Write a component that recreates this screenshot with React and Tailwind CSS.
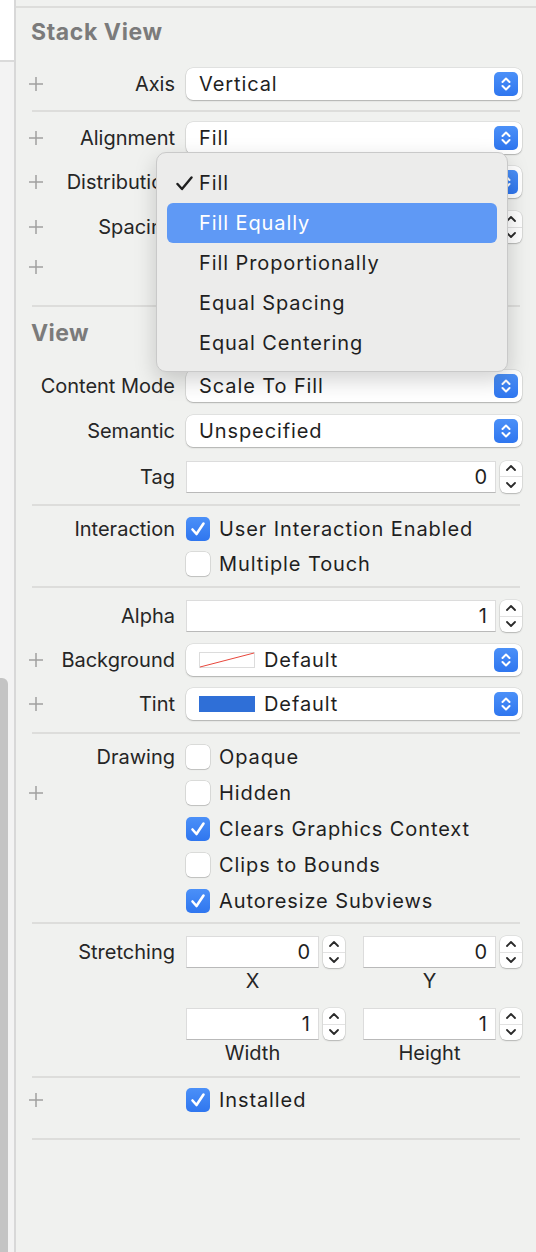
import React from "react";

const Plus = () => (
  <svg width="14" height="14" viewBox="0 0 14 14" className="shrink-0">
    <path d="M7 0v14M0 7h14" stroke="#a0a0a0" strokeWidth="1.5" />
  </svg>
);

const BlueChevron = () => (
  <div className="w-[24px] h-[24px] rounded-[5px] bg-gradient-to-b from-[#4b90f8] to-[#2f76ef] flex items-center justify-center shrink-0">
    <svg width="24" height="24" viewBox="0 0 24 24">
      <path d="M8.5 10L12 6.5L15.5 10M8.5 14L12 17.5L15.5 14" stroke="white" strokeWidth="2" fill="none" strokeLinecap="round" strokeLinejoin="round" />
    </svg>
  </div>
);

const Stepper = () => (
  <div className="w-[22px] h-[32px] rounded-[6px] bg-white shadow-[0_0_0_0.5px_rgba(0,0,0,0.12),0_1px_1.5px_rgba(0,0,0,0.2)] flex flex-col shrink-0">
    <div className="flex-1 flex items-center justify-center border-b border-[#e2e2e2]">
      <svg width="12" height="8" viewBox="0 0 12 8">
        <path d="M2 6L6 2L10 6" stroke="#2a2a2a" strokeWidth="1.8" fill="none" strokeLinecap="round" strokeLinejoin="round" />
      </svg>
    </div>
    <div className="flex-1 flex items-center justify-center">
      <svg width="12" height="8" viewBox="0 0 12 8">
        <path d="M2 2L6 6L10 2" stroke="#2a2a2a" strokeWidth="1.8" fill="none" strokeLinecap="round" strokeLinejoin="round" />
      </svg>
    </div>
  </div>
);

const Popup = ({ children }) => (
  <div className="flex-1 h-[32px] bg-white rounded-[7px] shadow-[0_0_0_0.5px_rgba(0,0,0,0.12),0_1px_1.5px_rgba(0,0,0,0.22)] flex items-center pl-[13px] pr-[4px]">
    <div className="flex-1 flex items-center text-[#1f1f1f] tracking-[0.9px]">{children}</div>
    <BlueChevron />
  </div>
);

const Field = ({ value, className = "flex-1" }) => (
  <div className={`${className} flex items-center gap-[4px]`}>
    <div className="flex-1 h-[32px] bg-white border border-[#dcdcdc] border-b-[#b9b9b9] flex items-center justify-end pr-[8px] text-[#1f1f1f]">
      {value}
    </div>
    <Stepper />
  </div>
);

const Check = ({ on }) =>
  on ? (
    <div className="w-[24px] h-[24px] rounded-[5px] bg-gradient-to-b from-[#4b90f8] to-[#2f76ef] flex items-center justify-center shrink-0">
      <svg width="24" height="24" viewBox="0 0 24 24">
        <path d="M6.5 12.5L10.5 17L17.5 6.5" stroke="white" strokeWidth="2.6" fill="none" strokeLinecap="round" strokeLinejoin="round" />
      </svg>
    </div>
  ) : (
    <div className="w-[24px] h-[24px] rounded-[5px] bg-white shadow-[0_0_0_0.5px_rgba(0,0,0,0.18),0_1px_1px_rgba(0,0,0,0.12)] shrink-0" />
  );

const Row = ({ h, plus, label, children }) => (
  <div className={`flex items-center ${h}`}>
    <div className="w-[170px] flex items-center pl-[13px] pr-[11px] shrink-0">
      {plus && <Plus />}
      <span className="ml-auto text-[#262626] whitespace-nowrap">{label}</span>
    </div>
    <div className="flex-1 mr-[14px] flex items-center">{children}</div>
  </div>
);

const CheckRow = ({ h = "h-[36px]", plus, label, on, text }) => (
  <Row h={h} plus={plus} label={label}>
    <div className="flex items-center gap-[9px]">
      <Check on={on} />
      <span className="text-[#1f1f1f] tracking-[0.9px]">{text}</span>
    </div>
  </Row>
);

const Sep = () => <div className="h-[2px] bg-[#dddddb] ml-[16px] mr-[16px]" />;

const menuItems = ["Fill", "Fill Equally", "Fill Proportionally", "Equal Spacing", "Equal Centering"];

export default function App() {
  return (
    <div className="relative w-[536px] h-[1252px] overflow-hidden flex bg-[#f0f1ef] font-['Inter',sans-serif] text-[20px] leading-none">
      {/* left strip */}
      <div className="w-[16px] flex flex-col shrink-0 border-r-2 border-[#d8d8d8]">
        <div className="h-[62px] bg-white border-b-2 border-[#dadada]" />
        <div className="flex-1 bg-[#f3f3f3] flex flex-col">
          <div className="h-[616px]" />
          <div className="flex-1 w-[8px] bg-[#c4c4c4] rounded-tr-[6px]" />
        </div>
      </div>

      {/* inspector panel */}
      <div className="flex-1 flex flex-col">
        <div className="h-[6px]" />
        <div className="h-[2px] bg-[#dddddb]" />
        <div className="h-[49px] flex items-center pl-[15px] text-[23px] tracking-[0.6px] font-bold text-[#7b7b7b]">Stack View</div>
        <Row h="h-[53px]" plus label="Axis">
          <Popup>Vertical</Popup>
        </Row>
        <Sep />
        <Row h="h-[52px]" plus label="Alignment">
          <Popup>Fill</Popup>
        </Row>
        <Row h="h-[36px]" plus label="Distribution">
          <Popup>Fill</Popup>
        </Row>
        <Row h="h-[54px]" plus label="Spacing">
          <Field value="0" />
        </Row>
        <Row h="h-[26px]" plus label="" />
        <div className="h-[25px]" />
        <Sep />
        <div className="h-[52px] flex items-center pl-[15px] text-[23px] tracking-[0.4px] font-bold text-[#7b7b7b]">View</div>
        <Row h="h-[54px]" label="Content Mode">
          <Popup>Scale To Fill</Popup>
        </Row>
        <Row h="h-[36px]" label="Semantic">
          <Popup>Unspecified</Popup>
        </Row>
        <Row h="h-[55px]" label="Tag">
          <Field value="0" />
        </Row>
        <Sep />
        <CheckRow h="h-[46px]" label="Interaction" on text="User Interaction Enabled" />
        <CheckRow h="h-[24px]" label="" text="Multiple Touch" />
        <div className="h-[10px]" />
        <Sep />
        <Row h="h-[56px]" label="Alpha">
          <Field value="1" />
        </Row>
        <Row h="h-[32px]" plus label="Background">
          <Popup>
            <svg width="56" height="16" viewBox="0 0 56 16" className="mr-[9px] shrink-0">
              <rect x="0.5" y="0.5" width="55" height="15" fill="white" stroke="#dcdcdc" />
              <path d="M1 15L55 1" stroke="#e8473c" strokeWidth="1" />
            </svg>
            Default
          </Popup>
        </Row>
        <Row h="h-[56px]" plus label="Tint">
          <Popup>
            <div className="w-[56px] h-[16px] bg-[#2f6fd7] mr-[9px] shrink-0" />
            Default
          </Popup>
        </Row>
        <Sep />
        <div className="h-[5px]" />
        <CheckRow label="Drawing" text="Opaque" />
        <CheckRow plus label="" text="Hidden" />
        <CheckRow label="" on text="Clears Graphics Context" />
        <CheckRow label="" text="Clips to Bounds" />
        <CheckRow label="" on text="Autoresize Subviews" />
        <div className="h-[3px]" />
        <Sep />
        <div className="h-[12px]" />
        <Row h="h-[32px]" label="Stretching">
          <div className="flex-1 flex gap-[18px]">
            <Field value="0" />
            <Field value="0" />
          </div>
        </Row>
        <Row h="h-[26px]" label="">
          <div className="flex-1 flex gap-[18px] text-[#262626]">
            <div className="flex-1 pr-[26px] text-center">X</div>
            <div className="flex-1 pr-[26px] text-center">Y</div>
          </div>
        </Row>
        <div className="h-[14px]" />
        <Row h="h-[32px]" label="">
          <div className="flex-1 flex gap-[18px]">
            <Field value="1" />
            <Field value="1" />
          </div>
        </Row>
        <Row h="h-[26px]" label="">
          <div className="flex-1 flex gap-[18px] text-[#262626]">
            <div className="flex-1 pr-[26px] text-center">Width</div>
            <div className="flex-1 pr-[26px] text-center">Height</div>
          </div>
        </Row>
        <div className="h-[10px]" />
        <Sep />
        <CheckRow h="h-[44px]" plus label="" on text="Installed" />
        <div className="h-[16px]" />
        <Sep />
      </div>

      {/* open distribution menu */}
      <div className="absolute left-[156px] top-[152px] w-[352px] h-[220px] rounded-[10px] bg-[#ececeb] border border-[#c9c9c9] shadow-[0_8px_22px_rgba(0,0,0,0.18)] p-[10px] flex flex-col tracking-[0.9px]">
        {menuItems.map((item, i) => (
          <div
            key={item}
            className={`relative h-[40px] shrink-0 rounded-[6px] flex items-center pl-[32px] ${
              i === 1 ? "bg-[#5f99f5] text-white" : "text-[#1f1f1f]"
            }`}
          >
            {i === 0 && (
              <svg width="17" height="15" viewBox="0 0 17 15" className="absolute left-[9px] top-[13px]">
                <path d="M1.5 8L6 13L15.5 1.5" stroke="#1f1f1f" strokeWidth="2.4" fill="none" strokeLinecap="round" strokeLinejoin="round" />
              </svg>
            )}
            {item}
          </div>
        ))}
      </div>
    </div>
  );
}
